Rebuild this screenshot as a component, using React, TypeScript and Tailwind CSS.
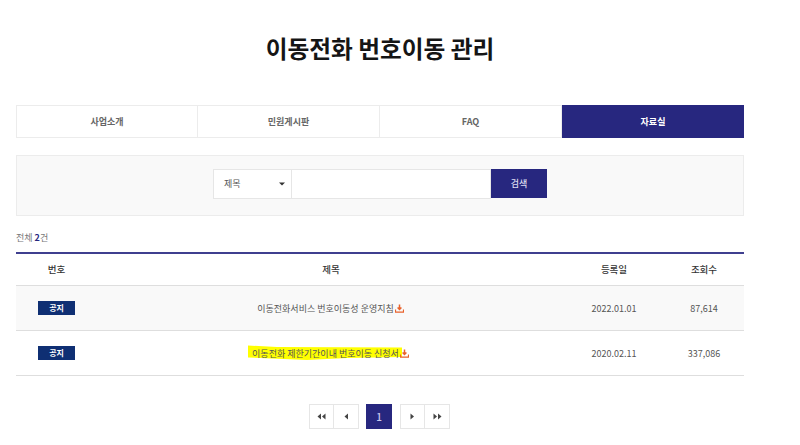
const font = { fontFamily: '"Noto Sans CJK KR", "Noto Sans", sans-serif' };

function DownloadIcon() {
  return (
    <svg width="9" height="9" viewBox="0 0 9 9" className="inline-block shrink-0">
      <path d="M4.5 0.5V5M2.6 3.4L4.5 5.4L6.4 3.4" fill="none" stroke="#e8622c" strokeWidth="1.5" />
      <path d="M0.5 5.5V8.2H8.5V5.5" fill="none" stroke="#e8622c" strokeWidth="1.2" />
    </svg>
  );
}

function Tri({ dir, double }: { dir: "l" | "r"; double?: boolean }) {
  const one = dir === "l" ? "M4 0.5V6.5L0.5 3.5Z" : "M0.5 0.5V6.5L4 3.5Z";
  return (
    <svg width={double ? 9 : 5} height="7" viewBox={double ? "0 0 9 7" : "0 0 5 7"}>
      <path d={one} fill="#444" />
      {double && <path d={one} fill="#444" transform="translate(4.5 0)" />}
    </svg>
  );
}

function PageBtn({ children, noLeft }: { children: React.ReactNode; noLeft?: boolean }) {
  return (
    <div className={`w-[25px] h-[25px] flex items-center justify-center border border-[#e6e6e6] bg-white ${noLeft ? "border-l-0" : ""}`}>
      {children}
    </div>
  );
}

function Row({ title, date, views, bg, highlight }: { title: string; date: string; views: string; bg: string; highlight?: boolean }) {
  return (
    <div className={`flex items-center h-[45px] border-b border-[#dedede] ${bg}`}>
      <div className="w-[81px] flex justify-center">
        <span className="w-[37px] h-[14px] flex items-center justify-center bg-[#0f2f73] text-white text-[8px] font-bold">공지</span>
      </div>
      <div className="w-[467px] pt-[1px] flex justify-center items-center">
        <span className="relative flex items-center gap-[1px] text-[9px] text-[#555]">
          {highlight && (
            <svg className="absolute left-[-5px] top-[-2px]" width="156" height="16" viewBox="0 0 156 16">
              <path d="M1 0.5L30 2L155 2.5L155 12L100 13L60 15L1 12.5Z" fill="#ffff00" />
            </svg>
          )}
          <span className="relative whitespace-nowrap">{title}</span>
          <span className="relative flex"><DownloadIcon /></span>
        </span>
      </div>
      <div className="w-[100px] pt-[1px] text-center text-[9px] text-[#555]">{date}</div>
      <div className="w-[80px] pt-[1px] text-center text-[9px] text-[#555]">{views}</div>
    </div>
  );
}

export default function App() {
  return (
    <div className="w-[800px] h-[445px] overflow-hidden bg-white" style={font}>
      <div className="w-[728px] ml-4">
        <h1 className="h-[105px] pt-[30px] text-center text-[23.7px] leading-[36px] font-bold text-[#151515]">이동전화 번호이동 관리</h1>

        <div className="flex h-[33px] text-[9px] font-bold text-[#666]">
          <div className="w-[182px] flex items-center justify-center border border-[#ececec]">사업소개</div>
          <div className="w-[182px] flex items-center justify-center border-y border-r border-[#ececec]">민원게시판</div>
          <div className="w-[182px] flex items-center justify-center border-y border-r border-[#ececec]">FAQ</div>
          <div className="w-[182px] flex items-center justify-center bg-[#27277f] text-white">자료실</div>
        </div>

        <div className="mt-[17px] h-[61px] pt-[13px] flex items-start justify-center bg-[#f9f9f9] border border-[#ececec]">
          <div className="flex h-[30px]">
            <div className="w-[79px] flex items-center justify-between pl-[10px] pr-[6px] bg-white border border-[#e6e6e6] text-[9px] text-[#555]">
              <span>제목</span>
              <svg width="6" height="4" viewBox="0 0 6 4"><path d="M0 0.5H6L3 3.5Z" fill="#333" /></svg>
            </div>
            <div className="w-[199px] bg-white border-y border-r border-[#e6e6e6]" />
            <div className="w-[56px] h-[29px] flex items-center justify-center bg-[#27277f] text-[#dcdcf0] text-[9px] font-medium">검색</div>
          </div>
        </div>

        <div className="mt-[15px] h-[14px] leading-[14px] text-[9px] text-[#777]">
          전체 <span className="font-bold text-[#27277f]">2</span>건
        </div>

        <div className="mt-[7px] border-t-2 border-[#3f3f8f]">
          <div className="flex items-center h-[32px] border-b border-[#dedede] text-[9.5px] font-medium text-[#333]">
            <div className="w-[81px] text-center">번호</div>
            <div className="w-[467px] text-center pl-[1px]">제목</div>
            <div className="w-[100px] text-center">등록일</div>
            <div className="w-[80px] text-center">조회수</div>
          </div>
          <Row title="이동전화서비스 번호이동성 운영지침" date="2022.01.01" views="87,614" bg="bg-[#f9f9f9]" />
          <Row title="이동전화 제한기간이내 번호이동 신청서" date="2020.02.11" views="337,086" bg="bg-white" highlight />
        </div>

        <div className="mt-[28px] pr-[1px] flex justify-center">
          <PageBtn><Tri dir="l" double /></PageBtn>
          <PageBtn noLeft><Tri dir="l" /></PageBtn>
          <div className="ml-[7px] mr-[8px] w-[26px] h-[25px] flex items-center justify-center bg-[#27277f] text-[#c9c9ee] text-[10px] font-medium">1</div>
          <PageBtn><Tri dir="r" /></PageBtn>
          <PageBtn noLeft><Tri dir="r" double /></PageBtn>
        </div>
      </div>
    </div>
  );
}
